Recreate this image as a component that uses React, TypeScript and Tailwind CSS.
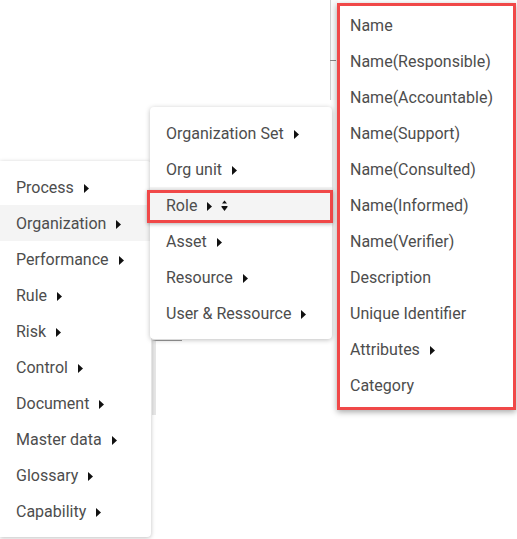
import React from "react";

const Caret = () => (
  <svg width="5" height="9" viewBox="0 0 5 9" className="ml-[10px] shrink-0">
    <path d="M0 0 L5 4.5 L0 9 Z" fill="#111" />
  </svg>
);

const SortIcon = () => (
  <svg width="7" height="12" viewBox="0 0 7 12" className="ml-[9px] shrink-0">
    <path d="M3.5 0.5 L6 3.5 L1 3.5 Z" fill="#111" />
    <path d="M0.5 7 L6.5 7 L3.5 11 Z" fill="#111" />
    <rect x="0.5" y="6" width="6" height="1" fill="#111" />
  </svg>
);

function Item({ label, caret, active }: { label: string; caret?: boolean; active?: boolean }) {
  return (
    <div className={`flex items-center h-9 px-4 pt-[2px] ${active ? "bg-[#f4f4f4]" : ""}`}>
      <span>{label}</span>
      {caret && <Caret />}
    </div>
  );
}

export default function App() {
  const left = [
    "Process",
    "Organization",
    "Performance",
    "Rule",
    "Risk",
    "Control",
    "Document",
    "Master data",
    "Glossary",
    "Capability",
  ];
  const right: [string, boolean][] = [
    ["Name", false],
    ["Name(Responsible)", false],
    ["Name(Accountable)", false],
    ["Name(Support)", false],
    ["Name(Consulted)", false],
    ["Name(Informed)", false],
    ["Name(Verifier)", false],
    ["Description", false],
    ["Unique Identifier", false],
    ["Attributes", true],
    ["Category", false],
  ];
  return (
    <div
      className="relative w-[517px] h-[539px] bg-white overflow-hidden text-[16px] text-[#4d4d4d]"
      style={{ fontFamily: "Roboto, 'Liberation Sans', sans-serif" }}
    >
      {/* background fragments */}
      <div className="absolute left-[330px] top-0 w-[8px] h-[100px] border-l border-[#cfcfcf] bg-[#fafafa]" />
      <div className="absolute left-[330px] top-[60px] w-[6px] h-px bg-[#888]" />
      <div className="absolute left-[152px] top-[340px] w-[30px] h-[75px] border-l-4 border-[#e6e6e6] border-t border-t-[#999]" />

      {/* left menu */}
      <div className="absolute left-0 top-[161px] w-[151px] py-2 bg-white rounded-r shadow-[0_1px_4px_rgba(0,0,0,0.25)]">
        {left.map((l) => (
          <Item key={l} label={l} caret active={l === "Organization"} />
        ))}
      </div>

      {/* middle menu */}
      <div className="absolute left-[150px] top-[107px] w-[182px] py-2 bg-white rounded shadow-[0_1px_5px_rgba(0,0,0,0.25)]">
        <Item label="Organization Set" caret />
        <Item label="Org unit" caret />
        <div className="flex items-center h-9 px-4 pt-[2px] bg-[#f4f4f4] relative">
          <span>Role</span>
          <Caret />
          <SortIcon />
          <div className="absolute -left-[3px] -right-[1px] top-[3px] bottom-0 border-[3px] border-[#f04848] shadow-[0_1px_4px_rgba(0,0,0,0.3)]" />
        </div>
        <Item label="Asset" caret />
        <Item label="Resource" caret />
        <Item label="User & Ressource" caret />
      </div>

      {/* right menu */}
      <div className="absolute left-[337px] top-[3px] w-[179px] h-[407px] bg-white border-[3px] border-[#f04848] shadow-[0_2px_6px_rgba(0,0,0,0.35)] pt-px">
        {right.map(([l, c]) => (
          <div key={l} className="flex items-center h-9 px-[10px] pt-[2px]">
            <span>{l}</span>
            {c && <Caret />}
          </div>
        ))}
      </div>
    </div>
  );
}
